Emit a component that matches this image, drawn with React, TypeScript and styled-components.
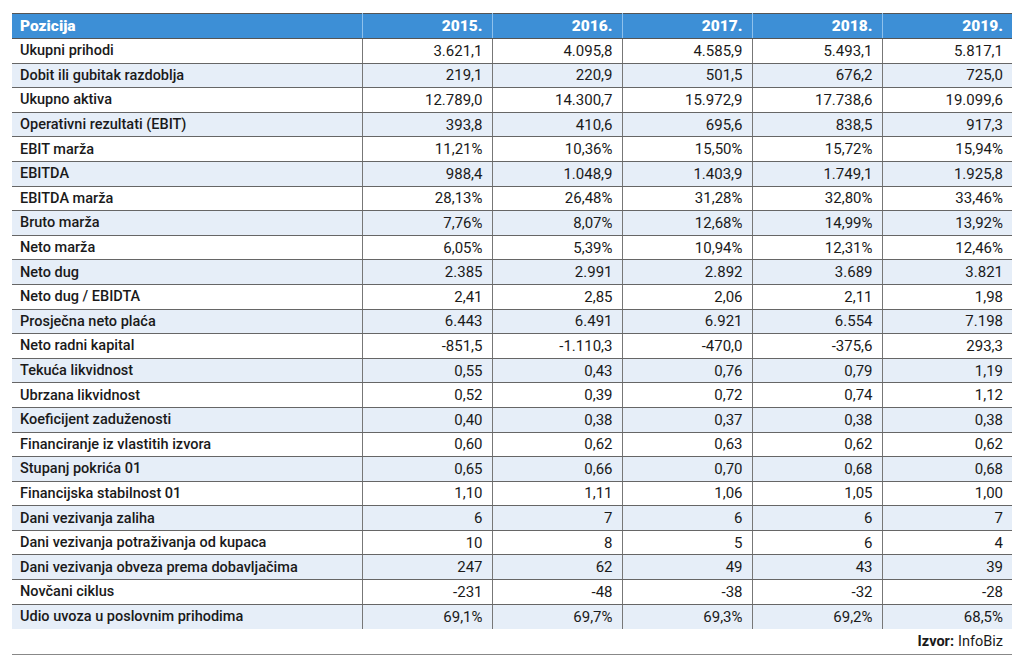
import React from "react";
import styled, { createGlobalStyle } from "styled-components";

const Global = createGlobalStyle`
  html, body { margin: 0; padding: 0; background: #fff; }
  body { font-family: Roboto, "Liberation Sans", sans-serif; }
`;

const Page = styled.div`
  padding: 13px 12px 0 12px;
  width: 1000px;
`;

const Table = styled.table`
  width: 1000px;
  border-collapse: collapse;
  table-layout: fixed;
  font-size: 14px;
  color: #1a1a1a;
  border-top: 1px solid #555;
`;

const Th = styled.th<{ $first?: boolean }>`
  background: #3d8fd6;
  color: #fff;
  font-weight: 900;
  font-size: 15.5px;
  height: 24px;
  padding: ${(p) => (p.$first ? "0 0 0 8px" : "0 9px 0 0")};
  text-align: ${(p) => (p.$first ? "left" : "right")};
  border-left: ${(p) => (p.$first ? "none" : "1px solid #8fc1ec")};
  border-bottom: 1px solid #555;
`;

const Tr = styled.tr<{ $alt: boolean }>`
  background: ${(p) => (p.$alt ? "#e6eef8" : "#fff")};
  height: 24.6px;
`;

const Td = styled.td<{ $first?: boolean }>`
  padding: ${(p) => (p.$first ? "0 0 0 8px" : "0 9px 0 0")};
  text-align: ${(p) => (p.$first ? "left" : "right")};
  font-weight: ${(p) => (p.$first ? 500 : 400)};
  font-size: ${(p) => (p.$first ? "14.5px" : "15px")};
  border-left: ${(p) => (p.$first ? "none" : "1px solid #777")};
  border-bottom: 1px solid #666;
  white-space: nowrap;
`;

const LastTd = styled(Td)`
  border-bottom: none;
`;

const Footer = styled.div`
  display: flex;
  justify-content: flex-end;
  padding: 4px 9px 4px 0;
  font-size: 14.5px;
  color: #1a1a1a;
  border-bottom: 1px solid #888;
`;

const Bold = styled.b`
  font-weight: 700;
  margin-right: 4px;
`;

const years = ["2015.", "2016.", "2017.", "2018.", "2019."];

const rows: [string, string[]][] = [
  ["Ukupni prihodi", ["3.621,1", "4.095,8", "4.585,9", "5.493,1", "5.817,1"]],
  ["Dobit ili gubitak razdoblja", ["219,1", "220,9", "501,5", "676,2", "725,0"]],
  ["Ukupno aktiva", ["12.789,0", "14.300,7", "15.972,9", "17.738,6", "19.099,6"]],
  ["Operativni rezultati (EBIT)", ["393,8", "410,6", "695,6", "838,5", "917,3"]],
  ["EBIT marža", ["11,21%", "10,36%", "15,50%", "15,72%", "15,94%"]],
  ["EBITDA", ["988,4", "1.048,9", "1.403,9", "1.749,1", "1.925,8"]],
  ["EBITDA marža", ["28,13%", "26,48%", "31,28%", "32,80%", "33,46%"]],
  ["Bruto marža", ["7,76%", "8,07%", "12,68%", "14,99%", "13,92%"]],
  ["Neto marža", ["6,05%", "5,39%", "10,94%", "12,31%", "12,46%"]],
  ["Neto dug", ["2.385", "2.991", "2.892", "3.689", "3.821"]],
  ["Neto dug / EBIDTA", ["2,41", "2,85", "2,06", "2,11", "1,98"]],
  ["Prosječna neto plaća", ["6.443", "6.491", "6.921", "6.554", "7.198"]],
  ["Neto radni kapital", ["-851,5", "-1.110,3", "-470,0", "-375,6", "293,3"]],
  ["Tekuća likvidnost", ["0,55", "0,43", "0,76", "0,79", "1,19"]],
  ["Ubrzana likvidnost", ["0,52", "0,39", "0,72", "0,74", "1,12"]],
  ["Koeficijent zaduženosti", ["0,40", "0,38", "0,37", "0,38", "0,38"]],
  ["Financiranje iz vlastitih izvora", ["0,60", "0,62", "0,63", "0,62", "0,62"]],
  ["Stupanj pokrića 01", ["0,65", "0,66", "0,70", "0,68", "0,68"]],
  ["Financijska stabilnost 01", ["1,10", "1,11", "1,06", "1,05", "1,00"]],
  ["Dani vezivanja zaliha", ["6", "7", "6", "6", "7"]],
  ["Dani vezivanja potraživanja od kupaca", ["10", "8", "5", "6", "4"]],
  ["Dani vezivanja obveza prema dobavljačima", ["247", "62", "49", "43", "39"]],
  ["Novčani ciklus", ["-231", "-48", "-38", "-32", "-28"]],
  ["Udio uvoza u poslovnim prihodima", ["69,1%", "69,7%", "69,3%", "69,2%", "68,5%"]],
];

export default function App() {
  return (
    <>
      <Global />
      <Page>
        <Table>
          <colgroup>
            <col style={{ width: 350 }} />
            {years.map((y) => (
              <col key={y} style={{ width: 130 }} />
            ))}
          </colgroup>
          <thead>
            <tr>
              <Th $first>Pozicija</Th>
              {years.map((y) => (
                <Th key={y}>{y}</Th>
              ))}
            </tr>
          </thead>
          <tbody>
            {rows.map(([label, vals], i) => {
              const last = i === rows.length - 1;
              const Cell = last ? LastTd : Td;
              return (
                <Tr key={label} $alt={i % 2 === 1}>
                  <Cell $first>{label}</Cell>
                  {vals.map((v, j) => (
                    <Cell key={j}>{v}</Cell>
                  ))}
                </Tr>
              );
            })}
          </tbody>
        </Table>
        <Footer>
          <Bold>Izvor:</Bold>InfoBiz
        </Footer>
      </Page>
    </>
  );
}
